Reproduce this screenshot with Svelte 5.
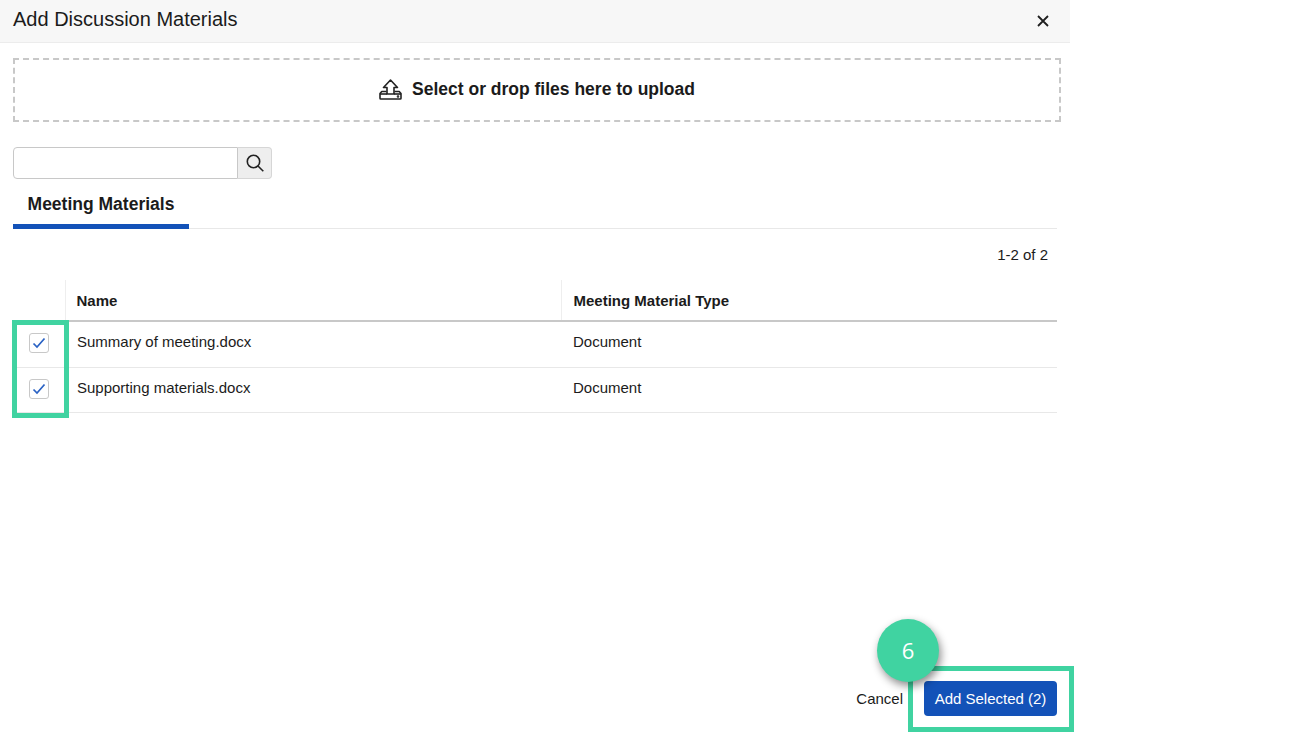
<script lang="ts">
	const rows = [
		{ name: 'Summary of meeting.docx', type: 'Document' },
		{ name: 'Supporting materials.docx', type: 'Document' }
	];
</script>

<div class="page">
	<div class="dialog">
		<header class="head">
			<h1>Add Discussion Materials</h1>
			<button class="close" aria-label="Close">
				<svg width="12" height="12" viewBox="0 0 12 12">
					<path d="M1 1l10 10M11 1L1 11" stroke="#1f1f1f" stroke-width="1.8" fill="none" />
				</svg>
			</button>
		</header>

		<div class="body">
			<div class="drop">
				<svg width="23" height="21" viewBox="0 0 23 21" fill="none" stroke="#222" stroke-width="1.6" stroke-linejoin="round">
					<path d="M7.500 12.500H2.800L1 14.500V19.200A.8 .8 0 0 0 1.800 20H21.200A.8 .8 0 0 0 22 19.200V14.500L20.200 12.500H15.500" />
					<path d="M1 15H8" />
					<path d="M15 15H22" />
					<path d="M11.500 1L4.500 8.500H8V15H15V8.500H18.500Z" />
					<circle cx="19" cy="17.500" r=".5" />
				</svg>
				<span>Select or drop files here to upload</span>
			</div>

			<div class="search">
				<input type="text" aria-label="Search" />
				<button class="search-btn" aria-label="Search">
					<svg width="18" height="18" viewBox="0 0 18 18" fill="none" stroke="#222" stroke-width="1.6">
						<circle cx="7.500" cy="7.500" r="6.200" />
						<path d="M12 12l5.300 5.300" />
					</svg>
				</button>
			</div>

			<div class="tabs">
				<div class="tab">Meeting Materials</div>
			</div>

			<div class="count">1-2 of 2</div>

			<table>
				<thead>
					<tr>
						<th class="check"></th>
						<th class="name">Name</th>
						<th>Meeting Material Type</th>
					</tr>
				</thead>
				<tbody>
					{#each rows as row}
						<tr>
							<td class="check">
								<span class="box">
									<svg width="14" height="12" viewBox="0 0 14 12" fill="none" stroke="#2a62c4" stroke-width="1.700">
										<path d="M1.500 6.500L5 10L12.500 1.500" />
									</svg>
								</span>
							</td>
							<td>{row.name}</td>
							<td>{row.type}</td>
						</tr>
					{/each}
				</tbody>
			</table>
		</div>

		<footer class="foot">
			<button class="cancel">Cancel</button>
			<button class="primary">Add Selected (2)</button>
		</footer>
	</div>

	<!-- tutorial annotations on top of the dialog -->
	<div class="mark mark-checks"></div>
	<div class="mark mark-add"></div>
	<div class="step">6</div>
</div>

<style>
	:global(body) {
		margin: 0;
		background: #fff;
	}

	.page {
		position: relative;
		width: 1300px;
		height: 740px;
		overflow: hidden;
		font-family: 'Liberation Sans', Arial, sans-serif;
		font-size: 15px;
		color: #1b1b1b;
	}

	.dialog {
		display: flex;
		flex-direction: column;
		width: 1070px;
		height: 740px;
	}

	.head {
		display: flex;
		align-items: center;
		justify-content: space-between;
		box-sizing: border-box;
		height: 43px;
		padding: 0 21px 4px 13px;
		background: #f7f7f7;
		border-bottom: 1px solid #ececec;
	}

	h1 {
		margin: 0;
		font-size: 20px;
		font-weight: 400;
	}

	.close {
		display: flex;
		padding: 0;
		margin-top: 3px;
		border: 0;
		background: none;
	}

	.body {
		display: flex;
		flex-direction: column;
		padding: 15px 9px 0 13px;
	}

	.drop {
		display: flex;
		align-items: center;
		justify-content: center;
		gap: 10px;
		box-sizing: border-box;
		height: 64px;
		padding-bottom: 2px;
		border: 2px dashed #c8c8c8;
		font-size: 17.500px;
		font-weight: 700;
	}

	.search {
		display: flex;
		width: 259px;
		height: 32px;
		margin-top: 25px;
	}

	.search input {
		flex: 1;
		min-width: 0;
		box-sizing: border-box;
		padding: 0 6px;
		border: 1px solid #c8c8c8;
		border-radius: 4px 0 0 4px;
		outline: 0;
	}

	.search-btn {
		display: flex;
		align-items: center;
		justify-content: center;
		box-sizing: border-box;
		width: 34px;
		padding: 0;
		border: 1px solid #d6d6d6;
		border-left: 0;
		border-radius: 0 4px 4px 0;
		background: #eeeeee;
	}

	.tabs {
		height: 50px;
		box-sizing: border-box;
		border-bottom: 1px solid #e8e8e8;
		margin-right: 4px;
	}

	.tab {
		box-sizing: border-box;
		width: 176px;
		height: 50px;
		padding-top: 15px;
		border-bottom: 5px solid #1352b8;
		font-size: 17.500px;
		font-weight: 700;
		text-align: center;
	}

	.count {
		height: 51px;
		padding: 18px 13px 0 0;
		box-sizing: border-box;
		line-height: 16px;
		text-align: right;
	}

	table {
		width: 1044px;
		border-collapse: collapse;
		table-layout: fixed;
	}

	th {
		height: 41px;
		padding: 0 11px 0 12px;
		box-sizing: border-box;
		border-bottom: 2px solid #c8c8c8;
		font-weight: 700;
		text-align: left;
	}

	th + th {
		border-left: 1px solid #eeeeee;
	}

	th.check,
	td.check {
		width: 52px;
		padding: 0;
		text-align: center;
	}

	th.name {
		width: 496px;
		padding-left: 11px;
	}

	td {
		height: 46px;
		padding: 0 11px 5px 12px;
		box-sizing: border-box;
		border-bottom: 1px solid #e8e8e8;
	}

	tr:last-child td {
		height: 45px;
		padding-bottom: 4px;
	}

	td.check,
	tr:last-child td.check {
		padding-bottom: 2px;
	}

	.box {
		display: inline-flex;
		align-items: center;
		justify-content: center;
		box-sizing: border-box;
		width: 20px;
		height: 20px;
		vertical-align: middle;
		border: 1px solid #c8c8c8;
		border-radius: 3px;
		background: #fff;
	}

	.foot {
		display: flex;
		align-items: center;
		justify-content: flex-end;
		gap: 21px;
		margin-top: auto;
		padding: 0 13px 24px 0;
	}

	.cancel {
		padding: 0;
		border: 0;
		background: none;
		font: inherit;
		color: inherit;
	}

	.primary {
		width: 133px;
		height: 35px;
		padding: 0;
		border: 0;
		border-radius: 4px;
		background: #1352b8;
		color: #fff;
		font: inherit;
	}

	.mark {
		position: absolute;
		box-sizing: border-box;
		border: 5px solid #40d3a1;
	}

	.mark-checks {
		left: 12px;
		top: 320px;
		width: 57px;
		height: 98px;
	}

	.mark-add {
		left: 908px;
		top: 666px;
		width: 166px;
		height: 66px;
	}

	.step {
		position: absolute;
		left: 877px;
		top: 619px;
		display: flex;
		align-items: center;
		justify-content: center;
		box-sizing: border-box;
		width: 62px;
		height: 63px;
		padding-bottom: 2px;
		border-radius: 50%;
		background: #40d3a1;
		box-shadow: 2px 4px 8px rgba(0, 0, 0, 0.45);
		color: #fff;
		font-family: 'Open Sans', sans-serif;
		font-size: 22px;
	}
</style>
